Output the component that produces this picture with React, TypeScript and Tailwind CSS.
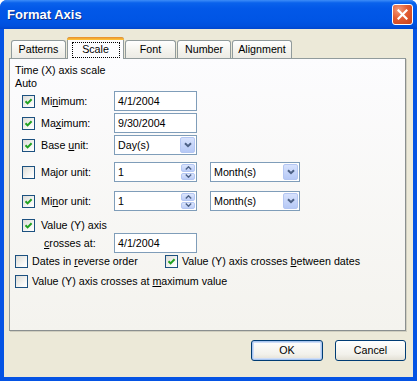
import React from "react";

const font = { fontFamily: '"Liberation Sans", Arial, sans-serif' };

function Check({ checked }: { checked?: boolean }) {
  return (
    <span className="w-[13px] h-[13px] shrink-0 border border-[#1C5180] bg-[linear-gradient(135deg,#DCDCD7_0%,#F8F8F6_70%,#FFFFFF_100%)] flex items-center justify-center">
      {checked && (
        <svg width="9" height="9" viewBox="0 0 9 9">
          <polyline points="1.5,4.2 3.6,6.4 7.6,2.2" fill="none" stroke="#21A121" strokeWidth="2" />
        </svg>
      )}
    </span>
  );
}

function U({ children }: { children: React.ReactNode }) {
  return <span className="underline underline-offset-[1px]">{children}</span>;
}

function Field({ value, kind }: { value: string; kind?: "spin" | "drop" }) {
  return (
    <div className="w-[83px] h-[20px] border border-[#7F9DB9] bg-white flex items-stretch">
      <span className="flex-1 pl-[3px] flex items-center">{value}</span>
      {kind === "spin" && <Spin />}
      {kind === "drop" && <DropBtn />}
    </div>
  );
}

function Spin() {
  return (
    <div className="w-[15px] flex flex-col gap-[1px] p-[1px] pl-0">
      <div className="flex-1 rounded-[2px] border border-[#B4C6F2] bg-[linear-gradient(180deg,#DCE6FD,#BCCDF7)] flex items-center justify-center">
        <svg width="7" height="4" viewBox="0 0 7 4">
          <polyline points="0.8,3.4 3.5,0.8 6.2,3.4" fill="none" stroke="#4D6185" strokeWidth="1.4" />
        </svg>
      </div>
      <div className="flex-1 rounded-[2px] border border-[#B4C6F2] bg-[linear-gradient(180deg,#DCE6FD,#BCCDF7)] flex items-center justify-center">
        <svg width="7" height="4" viewBox="0 0 7 4">
          <polyline points="0.8,0.6 3.5,3.2 6.2,0.6" fill="none" stroke="#4D6185" strokeWidth="1.4" />
        </svg>
      </div>
    </div>
  );
}

function DropBtn() {
  return (
    <div className="w-[16px] p-[1px] pl-0 flex">
      <div className="flex-1 rounded-[2px] border border-[#B4C6F2] bg-[linear-gradient(180deg,#D7E2FD,#B6C9F6)] flex items-center justify-center">
        <svg width="8" height="6" viewBox="0 0 8 6">
          <polyline points="1,1.2 4,4.2 7,1.2" fill="none" stroke="#4D6185" strokeWidth="2" />
        </svg>
      </div>
    </div>
  );
}

function Select({ value, w }: { value: string; w: string }) {
  return (
    <div className={`${w} h-[20px] border border-[#7F9DB9] bg-white flex items-stretch`}>
      <span className="flex-1 pl-[3px] flex items-center">{value}</span>
      <DropBtn />
    </div>
  );
}

function Row({
  checked,
  label,
  children,
  mt,
}: {
  checked?: boolean;
  label: React.ReactNode;
  children: React.ReactNode;
  mt: string;
}) {
  return (
    <div className={`${mt} h-[20px] flex items-center pl-[12px]`}>
      <Check checked={checked} />
      <span className="ml-[6px] w-[73px]">{label}</span>
      {children}
    </div>
  );
}

function Tab({ label, w, selected }: { label: string; w: string; selected?: boolean }) {
  if (selected) {
    return (
      <div
        className={`${w} h-[22px] -mb-px relative z-10 border border-b-0 border-[#919B9C] rounded-t-[3px] bg-[#FCFCFE] flex flex-col`}
      >
        <div className="h-[3px] -mx-px -mt-px rounded-t-[3px] bg-[linear-gradient(180deg,#E68B2C,#FFC73C)]" />
        <div className="flex-1 flex items-center justify-center">
          <span className="w-[48px] h-[16px] border border-dotted border-black flex items-center justify-center">
            {label}
          </span>
        </div>
      </div>
    );
  }
  return (
    <div
      className={`${w} h-[18px] border border-b-0 border-[#919B9C] rounded-t-[3px] bg-[linear-gradient(180deg,#FFFFFF,#F3F2EC_60%,#ECEBE5)] flex items-center justify-center`}
    >
      {label}
    </div>
  );
}

export default function App() {
  return (
    <div
      style={font}
      className="w-[417px] h-[381px] rounded-t-[7px] overflow-hidden bg-[#0453E4] flex flex-col text-[10.7px] text-black leading-[13px]"
    >
      {/* Title bar */}
      <div className="h-[29px] shrink-0 bg-[linear-gradient(180deg,#3D8DF8_0%,#0A62EC_10%,#0258E8_30%,#0055E5_70%,#0050DD_90%,#0046CE_100%)] flex items-center pl-[7px] pr-[4px]">
        <span className="flex-1 text-white font-bold text-[13px] [text-shadow:1px_1px_0_#0A2D8C]">
          Format Axis
        </span>
        <div className="w-[21px] h-[21px] rounded-[3px] border border-white bg-[radial-gradient(circle_at_30%_25%,#F39B7C_0%,#E25C33_45%,#C9401A_100%)] flex items-center justify-center">
          <svg width="11" height="11" viewBox="0 0 11 11">
            <path d="M1.5 1.5 L9.5 9.5 M9.5 1.5 L1.5 9.5" stroke="white" strokeWidth="2.2" strokeLinecap="square" />
          </svg>
        </div>
      </div>

      {/* Body */}
      <div className="flex-1 mx-[4px] mb-[4px] bg-[#ECE9D8] flex flex-col">
        {/* Tabs */}
        <div className="pt-[8px] pl-[7px] flex items-end gap-[1px] h-[29px]">
          <Tab label="Patterns" w="w-[55px]" />
          <Tab label="Scale" w="w-[57px]" selected />
          <Tab label="Font" w="w-[51px]" />
          <Tab label="Number" w="w-[54px]" />
          <Tab label="Alignment" w="w-[60px]" />
        </div>

        {/* Panel */}
        <div className="ml-[5px] w-[397px] h-[273px] border border-[#919B9C] border-r-[#8A8F8F] border-b-[#8A8F8F] bg-[linear-gradient(180deg,#FCFCFE,#F4F3EE)] flex flex-col shadow-[1px_1px_0_#D0CEBF]">
          <div className="mt-[5px] pl-[5px] h-[13px]">Time (X) axis scale</div>
          <div className="pl-[5px] h-[13px]">Auto</div>

          <Row
            mt="mt-[1px]"
            checked
            label={
              <>
                Mi<U>n</U>imum:
              </>
            }
          >
            <Field value="4/1/2004" />
          </Row>
          <Row
            mt="mt-[2px]"
            checked
            label={
              <>
                Ma<U>x</U>imum:
              </>
            }
          >
            <Field value="9/30/2004" />
          </Row>
          <Row
            mt="mt-[2px]"
            checked
            label={
              <>
                Base <U>u</U>nit:
              </>
            }
          >
            <Field value="Day(s)" kind="drop" />
          </Row>
          <Row
            mt="mt-[7px]"
            label={
              <>
                Ma<U>j</U>or unit:
              </>
            }
          >
            <Field value="1" kind="spin" />
            <div className="ml-[13px]">
              <Select value="Month(s)" w="w-[90px]" />
            </div>
          </Row>
          <Row
            mt="mt-[9px]"
            checked
            label={
              <>
                Mi<U>n</U>or unit:
              </>
            }
          >
            <Field value="1" kind="spin" />
            <div className="ml-[13px]">
              <Select value="Month(s)" w="w-[90px]" />
            </div>
          </Row>

          <div className="mt-[8px] h-[13px] flex items-center pl-[12px]">
            <Check checked />
            <span className="ml-[6px]">Value (Y) axis</span>
          </div>
          <div className="mt-[1px] h-[20px] flex items-center pl-[34px]">
            <span className="w-[70px]">
              <U>c</U>rosses at:
            </span>
            <Field value="4/1/2004" />
          </div>

          <div className="mt-[2px] h-[13px] flex items-center pl-[5px]">
            <div className="w-[150px] flex items-center">
              <Check />
              <span className="ml-[4px]">
                Dates in <U>r</U>everse order
              </span>
            </div>
            <Check checked />
            <span className="ml-[4px]">
              Value (Y) axis crosses <U>b</U>etween dates
            </span>
          </div>
          <div className="mt-[7px] h-[13px] flex items-center pl-[5px]">
            <Check />
            <span className="ml-[4px]">
              Value (Y) axis crosses at <U>m</U>aximum value
            </span>
          </div>
        </div>

        {/* Buttons */}
        <div className="mt-[9px] pr-[7px] flex justify-end gap-[12px]">
          <button className="w-[72px] h-[21px] rounded-[3px] border border-[#003C74] bg-[linear-gradient(180deg,#FFFFFF,#F2F1EB_70%,#E3E0D5)] shadow-[inset_0_0_0_1px_#A9C6F0,inset_0_0_0_2px_#CEDDF7] flex items-center justify-center">
            OK
          </button>
          <button className="w-[71px] h-[21px] rounded-[3px] border border-[#003C74] bg-[linear-gradient(180deg,#FFFFFF,#F2F1EB_70%,#E3E0D5)] flex items-center justify-center">
            Cancel
          </button>
        </div>
      </div>
    </div>
  );
}
